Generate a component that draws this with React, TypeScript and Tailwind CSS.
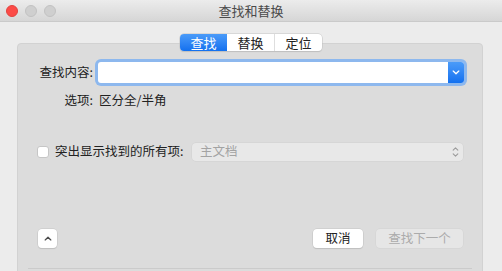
import React from "react";

function Chevron({ className }: { className?: string }) {
  return (
    <svg viewBox="0 0 10 6" className={className} fill="none" stroke="currentColor" strokeWidth="1.6" strokeLinecap="round" strokeLinejoin="round">
      <path d="M1.5 1.2 5 4.6 8.5 1.2" />
    </svg>
  );
}

export default function App() {
  return (
    <div className="w-[502px] h-[271px] overflow-hidden bg-[#ececec] font-['Noto_Sans_CJK_SC',sans-serif] text-[12.5px] text-[#222] leading-none">
      {/* title bar */}
      <div className="relative flex h-[22px] items-center justify-center border-b border-[#cacaca] bg-gradient-to-b from-[#ececec] to-[#d6d6d6]">
        <div className="absolute left-[6px] top-[5px] flex gap-[7px]">
          <span className="h-[12px] w-[12px] rounded-full bg-[#fc4b47] border border-[#e2433f]" />
          <span className="h-[12px] w-[12px] rounded-full bg-[#cfcfcf] border border-[#c2c2c2]" />
          <span className="h-[12px] w-[12px] rounded-full bg-[#cfcfcf] border border-[#c2c2c2]" />
        </div>
        <span className="text-[13px] text-[#4a4a4a]">查找和替换</span>
      </div>

      {/* tabs */}
      <div className="relative z-10 mx-auto mt-[12px] flex h-[17px] w-[142px] overflow-hidden rounded-[4px] bg-white shadow-[0_0_0_0.5px_#c4c4c4,0_1px_1px_rgba(0,0,0,0.15)] text-[13px]">
        <div className="flex flex-1 items-center justify-center bg-gradient-to-b from-[#4a9bf9] to-[#1170ef] text-white">查找</div>
        <div className="flex flex-1 items-center justify-center border-r border-[#dedede]">替换</div>
        <div className="flex flex-1 items-center justify-center">定位</div>
      </div>

      {/* group box */}
      <div className="-mt-[8px] ml-[17px] h-[240px] w-[466px] rounded-[4px] border border-[#d2d2d2] bg-[#dcdcdc]">
        <div className="mt-[18px] flex items-center">
          <span className="w-[75px] text-right">查找内容:</span>
          <div className="ml-[5px] flex h-[21px] w-[366px] rounded-[3px] bg-white shadow-[0_0_0_3px_#8db8ee]">
            <div className="flex-1" />
            <div className="flex w-[16px] items-center justify-center rounded-r-[3px] bg-gradient-to-b from-[#4a9bf9] to-[#1170ef] text-white">
              <Chevron className="h-[5px] w-[8px]" />
            </div>
          </div>
        </div>

        <div className="mt-[11px] flex items-center">
          <span className="w-[75px] text-right">选项:</span>
          <span className="ml-[6px]">区分全/半角</span>
        </div>

        <div className="mt-[36px] flex items-center">
          <span className="ml-[19px] h-[12px] w-[12px] rounded-[3px] border border-[#c6c6c6] bg-white" />
          <span className="ml-[6px]">突出显示找到的所有项:</span>
          <div className="ml-auto mr-[19px] flex h-[18px] w-[271px] items-center rounded-[4px] bg-[#e8e8e8] shadow-[0_0_0_0.5px_#d0d0d0] pl-[8px] pr-[4px]">
            <span className="flex-1 text-[#a3a3a3]">主文档</span>
            <div className="flex flex-col items-center gap-[2px] text-[#9a9a9a]">
              <Chevron className="h-[4px] w-[7px] rotate-180" />
              <Chevron className="h-[4px] w-[7px]" />
            </div>
          </div>
        </div>

        <div className="mt-[68px] flex items-center">
          <div className="ml-[20px] flex h-[19px] w-[19px] items-center justify-center rounded-[4px] bg-white shadow-[0_0_0_0.5px_#c4c4c4,0_1px_1px_rgba(0,0,0,0.15)] text-[#4a4a4a]">
            <Chevron className="h-[5px] w-[8px] rotate-180" />
          </div>
          <div className="ml-auto flex h-[19px] w-[50px] items-center justify-center rounded-[4px] bg-white shadow-[0_0_0_0.5px_#c4c4c4,0_1px_1px_rgba(0,0,0,0.15)]">取消</div>
          <div className="ml-[13px] mr-[19px] flex h-[19px] w-[87px] items-center justify-center rounded-[4px] bg-[#e6e6e6] text-[#ababab] shadow-[0_0_0_0.5px_#d2d2d2]">查找下一个</div>
        </div>

        <div className="ml-[10px] mt-[20px] h-px w-[444px] bg-[#cbcbcb]" />
      </div>
    </div>
  );
}
